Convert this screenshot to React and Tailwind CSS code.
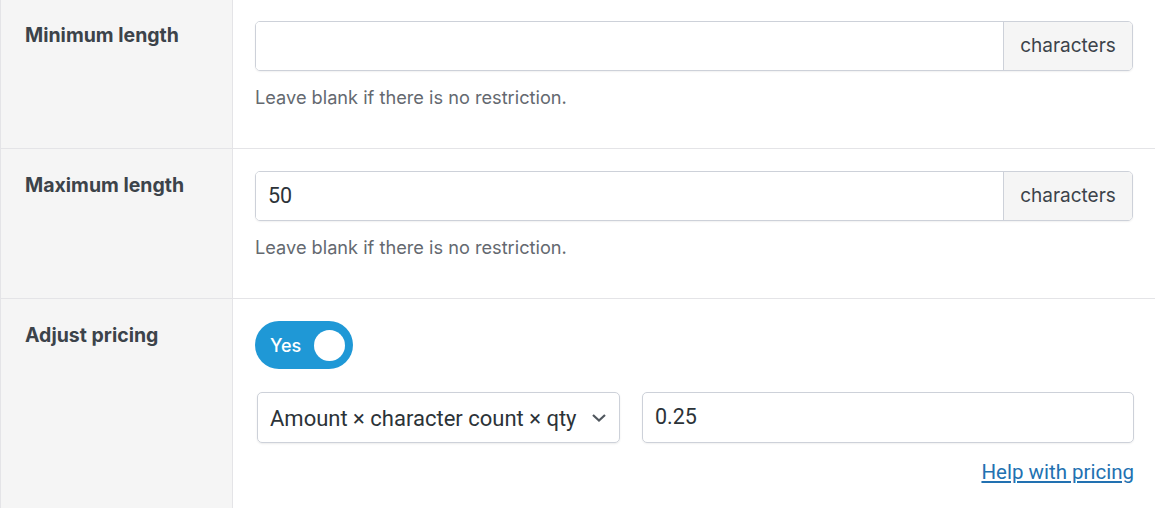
import React from "react";

const labelCls = "w-[232px] shrink-0 bg-[#f5f5f5] border-r border-[#e4e4e7] pl-6 text-[19.5px] font-bold text-[#3c434a] leading-[28px]";
const font = { fontFamily: "Inter, 'Noto Sans', sans-serif" };
const roboto = { fontFamily: "Roboto, sans-serif" };

function LengthRow({ label, value, first }) {
  return (
    <div className="flex border-b border-[#e4e4e7]">
      <div className={labelCls + (first ? " pt-[21px]" : " pt-[22px]")}>{label}</div>
      <div className={"flex-1 pl-[22px] pr-[22px] pb-[38px]" + (first ? " pt-[21px]" : " pt-[22px]")}>
        <div className="flex h-[50px] rounded-[5px] border border-[#cdd1d9] shadow-[0_1px_2px_rgba(0,0,0,0.06)] overflow-hidden">
          <div className="flex-1 flex items-center pl-3 text-[21.5px] text-[#2c3338] bg-white" style={roboto}>{value}</div>
          <div className="w-[129px] flex items-center justify-center border-l border-[#cdd1d9] bg-[#f5f5f5] text-[19px] text-[#3c434a] pt-px">characters</div>
        </div>
        <div className="mt-[13px] text-[18.2px] leading-[26px] text-[#646970]">Leave blank if there is no restriction.</div>
      </div>
    </div>
  );
}

export default function App() {
  return (
    <div className="w-[1155px] h-[508px] overflow-hidden bg-white border-l border-[#e4e4e7]" style={font}>
      <LengthRow label="Minimum length" value="" first />
      <LengthRow label="Maximum length" value="50" />
      <div className="flex h-[260px]">
        <div className={labelCls + " pt-[22px]"}>Adjust pricing</div>
        <div className="flex-1 pl-[22px] pr-[21px] pt-[22px]">
          <div className="flex items-center justify-between w-[98px] h-[48px] rounded-full bg-[#1f98d6] pl-[15px] pr-[8px]">
            <span className="text-[18px] text-white font-medium">Yes</span>
            <span className="w-[31px] h-[31px] rounded-full bg-white"></span>
          </div>
          <div className="flex gap-[22px] mt-[23px] pl-[2px]">
            <div className="w-[363px] h-[51px] flex items-center justify-between rounded-[5px] border border-[#cdd1d9] shadow-[0_1px_2px_rgba(0,0,0,0.08)] pl-3 pr-3 text-[22px] text-[#2c3338]" style={roboto}>
              <span className="whitespace-nowrap pt-px">Amount × character count × qty</span>
              <svg width="16" height="10" viewBox="0 0 16 10" fill="none" className="shrink-0"><path d="M2 2l6 5.5L14 2" stroke="#50575e" strokeWidth="2.2" /></svg>
            </div>
            <div className="flex-1 h-[51px] flex items-center rounded-[5px] border border-[#cdd1d9] shadow-[0_1px_2px_rgba(0,0,0,0.06)] pl-3 text-[21.5px] text-[#2c3338]" style={roboto}>0.25</div>
          </div>
          <div className="flex justify-end mt-[17px]">
            <a className="text-[20.5px] leading-6 text-[#2271b1] underline" style={roboto}>Help with pricing</a>
          </div>
        </div>
      </div>
    </div>
  );
}
